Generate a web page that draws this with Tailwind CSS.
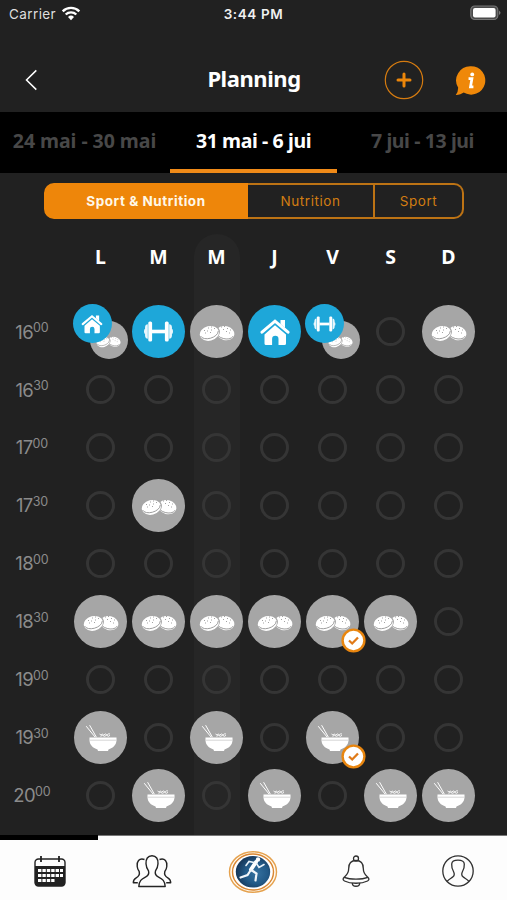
<!DOCTYPE html>
<html lang="fr">
<head>
<meta charset="utf-8">
<title>Planning</title>
<script src="https://cdn.jsdelivr.net/npm/@tailwindcss/browser@4"></script>
</head>
<body class="w-[507px] h-[900px] overflow-hidden bg-[#212121] text-white font-['Noto_Sans',sans-serif] flex flex-col">
<svg class="hidden">
  <symbol id="cookies" viewBox="0 0 36 20">
    <g transform="rotate(14 26 10)"><ellipse cx="26.500" cy="11" rx="9.200" ry="7" fill="#fff"/><path d="M17.500 12c1 6 15.500 6.500 17.300.3" fill="none" stroke="#8e8e8e" stroke-width=".8"/></g>
    <g transform="rotate(-14 10 10)"><ellipse cx="10.500" cy="11" rx="10.300" ry="8" fill="#a6a6a6"/><ellipse cx="10" cy="11.500" rx="9.700" ry="7.300" fill="#fff"/><path d="M.8 11.800c1.500 6.200 16.500 6.200 18.500-.6" fill="none" stroke="#8e8e8e" stroke-width=".8"/></g>
    <path d="M5 8.500h1M9 6h1M12 5h1M8 9h1M12 8h1M15 6.500h1M11 10.500h1M6 11h1M22 5h1M25 4.500h1M24 7.500h1M28 6.500h1M31 8h1M27 9.500h1M30 11h1" stroke="#999" stroke-width=".9"/>
  </symbol>
  <symbol id="house" viewBox="0 0 30 28">
    <path d="M2 14.200 15 3.200l13 11" fill="none" stroke="#fff" stroke-width="3" stroke-linecap="round" stroke-linejoin="miter"/>
    <path d="M20.500 2H25v8l-4.500-4z" fill="#fff"/>
    <path d="m15 7.300 11 9.200v9q0 1.500-1.500 1.500h-6v-6a3.200 3.200 0 0 0-6.400 0v6H6q-1.500 0-1.500-1.500v-9z" fill="#fff"/>
  </symbol>
  <symbol id="dumbbell" viewBox="0 0 32 22">
    <path d="M9 11h14" stroke="#fff" stroke-width="3.800"/>
    <rect x="5.300" y=".5" width="4" height="21" rx="1.600" fill="#fff"/><rect x="22.700" y=".5" width="4" height="21" rx="1.600" fill="#fff"/>
    <path d="M4.800 3.500v15q-2.600 0-2.900-3V13.500Q.8 13.500.8 11t1.100-2.500v-2q.3-3 2.900-3zM27.200 3.500v15q2.600 0 2.900-3V13.500q1.100 0 1.100-2.500t-1.100-2.500v-2q-.3-3-2.900-3z" fill="#fff" opacity=".9"/>
  </symbol>
  <symbol id="bowl" viewBox="0 0 32 28">
    <path d="m1.200 2.200 9 11M4.600 1.200l6.800 12" stroke="#fff" stroke-width="1"/>
    <path d="m14.500 10 1.500 1 1.300-.9 1.500 1 1.500-1.200 1.700 1.200 1.700-1.300 1.300.2M15.500 12.300l2-1 2 1 2-1 2 1 1.500-1" fill="none" stroke="#fff" stroke-width=".9"/>
    <path d="M4.500 13.500h27v2.500c0 5-3.500 8-8 9.500l-.5 1.500H13l-.5-1.500c-4.500-1.500-8-4.500-8-9.500z" fill="#fff"/><path d="M5 16.200h26" stroke="#aaa" stroke-width=".5"/>
  </symbol>
</svg>

<header class="h-[112px] shrink-0">
  <div class="h-[28px] grid grid-cols-3 items-center px-[9px] text-[13.500px] font-['Inter',sans-serif]">
    <div class="flex items-center gap-[5px] text-[#dedede]"><span class="tracking-[0.400px]">Carrier</span>
      <svg class="w-[20px] h-[15px] -mt-[2px]" viewBox="0 0 20 15" fill="none" stroke="#fff" stroke-width="2.400"><path d="M1.700 5.300a11.800 11.800 0 0 1 16.600 0M4.700 8.500a7.600 7.600 0 0 1 10.600 0"/><path d="m10 14.200-3-3.200a4.400 4.400 0 0 1 6 0z" fill="#fff" stroke="none"/></svg></div>
    <div class="text-center font-semibold tracking-[0.600px] text-[#f0f0f0]">3:44 PM</div>
    <div class="flex justify-end -mr-[3px] -mt-[2px]"><svg class="w-[31px] h-[16px]" viewBox="0 0 31 16"><rect x=".8" y="1" width="27" height="13.500" rx="4" fill="#4a4a4a" stroke="#777" stroke-width="1.200"/><rect x="3" y="3" width="22.600" height="9.500" rx="2" fill="#fff"/><path d="M29 5.500q3 2.300 0 4.600z" fill="#777"/></svg></div>
  </div>
  <div class="h-[84px] flex items-center pt-[24px] pb-[12px] pl-[24px] pr-[21px]">
    <svg class="w-[14px] h-[22px] mt-[8px]" viewBox="0 0 14 22" fill="none" stroke="#fff" stroke-width="1.500"><path d="m12.300 1.400-9.800 9.600 9.800 9.600"/></svg>
    <h1 class="w-[432px] -mr-[86px] text-center text-[22px] leading-[30px] font-bold tracking-[-0.450px] mt-[3px]">Planning</h1>
    <div class="flex items-center gap-[31px] mt-[8px]">
      <svg class="w-[40px] h-[40px]" viewBox="0 0 40 40"><circle cx="20" cy="20" r="18.700" fill="none" stroke="#d57b10" stroke-width="1.200"/><path d="M20 14v12M14 20h12" stroke="#ec860a" stroke-width="3" stroke-linecap="round"/></svg>
      <svg class="w-[31px] h-[31px]" viewBox="0 0 32 32"><path d="M16.500 1.200A14.700 14.700 0 1 1 9 28.500Q5 31.500.8 31q2.400-3 2.500-7.500A14.700 14.700 0 0 1 16.500 1.200z" fill="#ef8809"/><circle cx="17.800" cy="9.700" r="2" fill="#fff"/><path d="M14 14h3.500l-1.500 8.500h3" fill="none" stroke="#fff" stroke-width="2.800"/></svg>
    </div>
  </div>
</header>

<nav class="h-[61px] shrink-0 bg-black grid grid-cols-3 text-[19.500px] font-bold leading-[57px] text-center">
  <div class="text-[#484848] tracking-[-0.050px]">24 mai - 30 mai</div>
  <div class="border-b-[4px] border-[#f08a18] mx-px tracking-[-0.400px]">31 mai - 6 jui</div>
  <div class="text-[#484848] tracking-[-0.400px]">7 jui - 13 jui</div>
</nav>

<div class="ml-[44px] mt-[10px] w-[420px] h-[36px] shrink-0 flex text-[13.500px] leading-[33px] text-center text-[#d17d12] font-['Inter',sans-serif]">
  <div class="w-[204px] rounded-l-[10px] border-2 border-[#ee860a] bg-[#ee860a] text-[#fff8e8] font-bold tracking-[0.550px]">Sport &amp; Nutrition</div>
  <div class="w-[127px] border-y-2 border-r-2 border-[#bd7314] tracking-[0.550px]">Nutrition</div>
  <div class="flex-1 rounded-r-[10px] border-y-2 border-r-2 border-[#bd7314] tracking-[0.550px]">Sport</div>
</div>

<main class="relative h-[616px] shrink-0">
  <div class="absolute left-[194px] top-[15px] w-[46px] bottom-0 rounded-t-full bg-[#262626]"></div>
  <div class="relative ml-[71.500px] pt-[23px] h-[84px] grid grid-cols-[repeat(7,58px)] text-center text-[19.500px] leading-[30px] font-bold"><span>L</span><span>M</span><span>M</span><span>J</span><span>V</span><span>S</span><span>D</span></div>
  <div id="rows" class="relative"></div>
</main>

<footer class="relative h-[65px] shrink-0 bg-[#fdfdfd] border-t border-[#777] grid grid-cols-5 items-center justify-items-center pt-[5px]">
  <div class="absolute left-0 -top-px w-[98px] h-[5px] bg-black"></div>
  <svg class="w-[32px] h-[32px] mr-[2px]" viewBox="0 0 32 32"><rect x="1" y="4" width="30" height="27" rx="3.500" fill="none" stroke="#222" stroke-width="1.400"/><path d="M1 11h30v17q0 3-3 3H4q-3 0-3-3z" fill="#222"/><path d="M7 1v6M25 1v6" stroke="#222" stroke-width="1.800"/><path d="M4 15.500h25M4 20.500h25M4 25.500h16.500" stroke="#fff" stroke-width="3.200" stroke-dasharray="3.400 1"/></svg>
  <svg class="w-[40px] h-[34px]" viewBox="0 0 40 34" fill="none" stroke="#242424" stroke-width="1.400" stroke-linejoin="round"><path d="M20 1.700c-4.300 0-6.300 3.500-6 8 .2 3.500 1.300 5.500 2.500 7.200.7 2.500-.1 4.600-2.700 6C10 25 7.200 26 6.800 32.500h26.400C32.800 26 30 25 26.200 22.900c-2.600-1.400-3.400-3.500-2.700-6 1.200-1.700 2.300-3.700 2.500-7.200.3-4.500-1.700-8-6-8z"/><path d="M12.500 5.500C7 3.500 4.500 8 5.200 12.500c.4 3 1.300 3.700 2 5 .8 3.500-.8 5.200-3 6.300-2 1.100-2.900 2.200-2.900 5h4.500M27.500 5.500C33 3.500 35.500 8 34.800 12.500c-.4 3-1.300 3.700-2 5-.8 3.500.8 5.200 3 6.300 2 1.100 2.900 2.200 2.900 5h-4.500"/></svg>
  <svg class="w-[50px] h-[44px]" viewBox="0 0 50 44"><defs><radialGradient id="g" cx=".6" cy=".55" r=".65"><stop stop-color="#35719f"/><stop offset=".5" stop-color="#225a88"/><stop offset="1" stop-color="#132f4f"/></radialGradient></defs><ellipse cx="25" cy="23" rx="23.500" ry="20.300" fill="#fffaf0" stroke="#e5a14d" stroke-width="1.400"/><ellipse cx="25" cy="23" rx="20.500" ry="18" fill="#fff" stroke="#d98632" stroke-width="1.400"/><ellipse cx="25" cy="22.800" rx="17.200" ry="15.700" fill="url(#g)"/><circle cx="30" cy="10.500" r="2.200" fill="#fff"/><path d="m28 13-5 7.500" stroke="#fff" stroke-width="4" stroke-linecap="round"/><path d="m26 13.500-5-1-3 4M28.500 14.500l2.500 4 5-3" fill="none" stroke="#e8f1f8" stroke-width="1.600" stroke-linecap="round"/><path d="m24 21.500 4.500 3-1 7M22.500 21.500l-3 4.500-7 2.500" fill="none" stroke="#f0f5fa" stroke-width="2.200" stroke-linecap="round"/></svg>
  <svg class="w-[28px] h-[32px] ml-[2px]" viewBox="0 0 28 32" fill="none" stroke="#303030" stroke-width="1.300"><circle cx="14" cy="3.500" r="2.500"/><path d="M14 5.500c-5 0-7.300 3.500-7.300 8 0 5-2 6.500-4.300 8.500C.3 24 1 25.200 2.500 26c6 3 17 3 23 0 1.500-.8 2.200-2 .1-4-2.300-2-4.300-3.500-4.300-8.500 0-4.500-2.300-8-7.300-8zM2.200 22.300c6 2.500 17.600 2.500 23.600 0"/><path d="M10.300 28c0 4.300 7.400 4.300 7.400 0"/></svg>
  <svg class="w-[34px] h-[34px] ml-[4px]" viewBox="0 0 34 34" fill="none" stroke="#303030" stroke-width="1.300"><circle cx="17" cy="17" r="15.200"/><path d="M6 27.500c2-2.500 4.200-3.200 6-4.700 1.900-1.500 1.300-3.500.6-5-1.600-2.800-2.100-5.300-1.900-7.800.2-3 2.800-3.900 6.300-3.900s6.100.9 6.300 3.900c.2 2.500-.3 5-1.900 7.800-.7 1.500-1.300 3.500.6 5 1.800 1.500 4 2.200 6 4.700"/></svg>
</footer>

<script>
const gray = 'rounded-full bg-[#a6a6a6] flex items-center justify-center';
const blue = 'rounded-full bg-[#1ea7d9] flex items-center justify-center';
const icon = (id, cls) => `<svg class="${cls}"><use href="#${id}"/></svg>`;
const big = (tone, inner) => `<div class="${tone} w-[53px] h-[53px]">${inner}</div>`;
const check = '<svg class="absolute left-[37.500px] top-[35px] w-[25px] h-[25px]" viewBox="0 0 25 25"><circle cx="12.500" cy="12.500" r="10.900" fill="#fff" stroke="#e9860f" stroke-width="2.400"/><path d="m8 12.500 3.200 3 5.800-6" fill="none" stroke="#e07a18" stroke-width="2.300"/></svg>';
const pair = inner => `<div class="absolute left-[18px] top-[18px] w-[38px] h-[38px] ${gray}">${icon('cookies', 'w-[25px] h-[14px] mt-[1px]')}</div><div class="absolute left-[1px] top-[1px] w-[39px] h-[39px] ${blue}">${inner}</div>`;
const cells = {
  '.': '<div class="w-[29px] h-[29px] rounded-full border-[3px] border-[#353535]"></div>',
  c: big(gray, icon('cookies', 'w-[36px] h-[20px]')),
  b: big(gray, icon('bowl', 'w-[32px] h-[28px] ml-[1px]')),
  h: big(blue, icon('house', 'w-[30px] h-[28px]')),
  d: big(blue, icon('dumbbell', 'w-[31px] h-[21px]')),
  H: pair(icon('house', 'w-[22px] h-[20px]')),
  D: pair(icon('dumbbell', 'w-[23px] h-[16px]'))
};
cells.C = cells.c + check;
cells.B = cells.b + check;
const plan = [['16','00','HdchD.c'],['16','30','.......'],['17','00','.......'],['17','30','.c.....'],['18','00','.......'],['18','30','ccccCc.'],['19','00','.......'],['19','30','b.b.B..'],['20','00','.b.b.bb']];
document.getElementById('rows').innerHTML = plan.map(([h, m, days]) =>
  `<div class="h-[57.940px] grid grid-cols-[63.800px_repeat(7,58px)]"><div class="flex items-center justify-center pt-[1px] text-[#8b8b8b] font-['Inter',sans-serif] text-[18.500px] tracking-[-0.600px]"><span>${h}</span><span class="text-[12.500px] -mt-[8px] tracking-[-0.200px]">${m}</span></div>${[...days].map(d => `<div class="relative left-[8px] flex items-center justify-center">${cells[d]}</div>`).join('')}</div>`).join('');
</script>
</body>
</html>
